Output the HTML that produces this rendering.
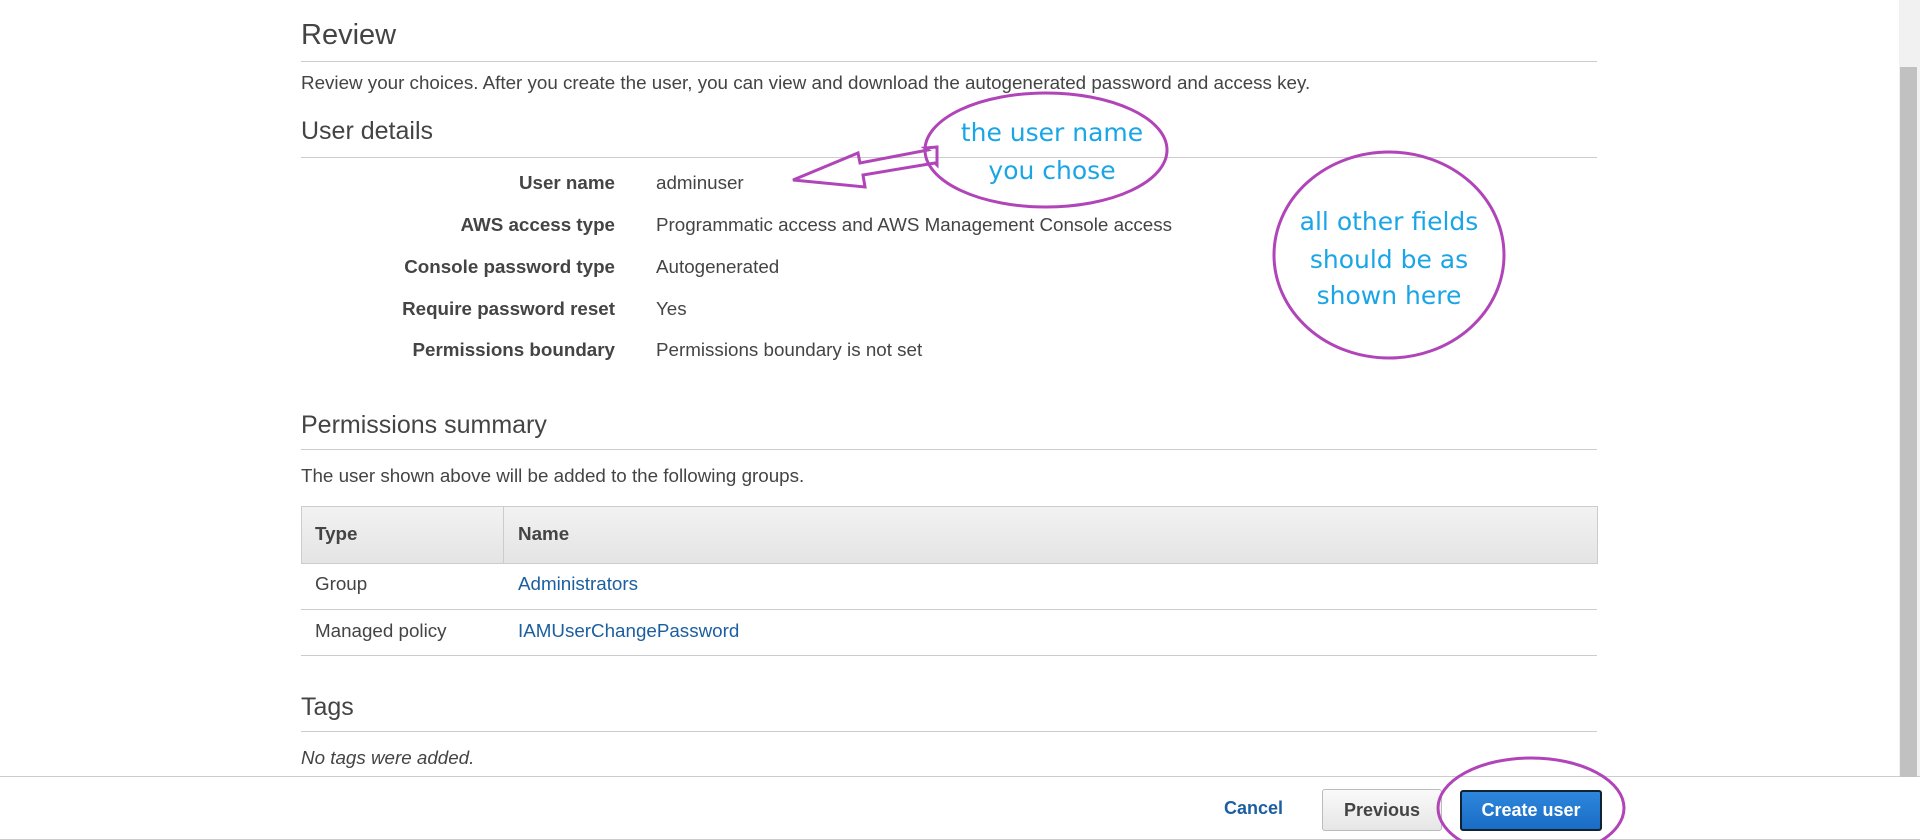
<!DOCTYPE html>
<html><head><meta charset="utf-8"><style>
body{margin:0;width:1920px;height:840px;overflow:hidden;background:#fff;font-family:"Liberation Sans",Arial,sans-serif;color:#444;position:relative}
.a{position:absolute;white-space:nowrap}
.h{font-size:29px;color:#444}
.line{position:absolute;left:301px;width:1296px;height:1px;background:#ccc}
.t{font-size:18.8px;color:#444}
.lbl{font-weight:bold;text-align:right;width:315px;left:300px}
.lnk{color:#1c5fa0}
</style></head><body>
<div class="a h" style="left:301px;top:19px">Review</div>
<div class="line" style="top:61px"></div>
<div class="a t" style="left:301px;top:72px">Review your choices. After you create the user, you can view and download the autogenerated password and access key.</div>
<div class="a h" style="left:301px;top:117px;font-size:25px">User details</div>
<div class="line" style="top:157px"></div>
<div class="a t lbl" style="top:172px">User name</div><div class="a t" style="left:656px;top:172px">adminuser</div>
<div class="a t lbl" style="top:214px">AWS access type</div><div class="a t" style="left:656px;top:214px">Programmatic access and AWS Management Console access</div>
<div class="a t lbl" style="top:256px">Console password type</div><div class="a t" style="left:656px;top:256px">Autogenerated</div>
<div class="a t lbl" style="top:298px">Require password reset</div><div class="a t" style="left:656px;top:298px">Yes</div>
<div class="a t lbl" style="top:339px">Permissions boundary</div><div class="a t" style="left:656px;top:339px">Permissions boundary is not set</div>
<div class="a h" style="left:301px;top:411px;font-size:25px">Permissions summary</div>
<div class="line" style="top:449px"></div>
<div class="a t" style="left:301px;top:465px">The user shown above will be added to the following groups.</div>
<div class="a" style="left:301px;top:506px;width:1295px;height:56px;background:linear-gradient(#f2f2f2,#e4e4e4);border:1px solid #ccc"></div>
<div class="a" style="left:503px;top:507px;width:1px;height:56px;background:#ccc"></div>
<div class="a t" style="left:315px;top:523px;font-weight:bold">Type</div>
<div class="a t" style="left:518px;top:523px;font-weight:bold">Name</div>
<div class="a t" style="left:315px;top:573px">Group</div><div class="a t lnk" style="left:518px;top:573px">Administrators</div>
<div class="line" style="top:609px"></div>
<div class="a t" style="left:315px;top:620px">Managed policy</div><div class="a t lnk" style="left:518px;top:620px">IAMUserChangePassword</div>
<div class="line" style="top:655px"></div>
<div class="a h" style="left:301px;top:693px;font-size:25px">Tags</div>
<div class="line" style="top:731px"></div>
<div class="a t" style="left:301px;top:747px;font-style:italic">No tags were added.</div>
<div class="a" style="left:0;top:776px;width:1920px;height:1px;background:#ccc"></div>
<div class="a" style="left:0;top:839px;width:1920px;height:1px;background:#ccc"></div>
<div class="a" style="left:1899px;top:0;width:21px;height:776px;background:#f1f1f1"></div>
<div class="a" style="left:1900px;top:67px;width:17px;height:710px;background:#c1c1c1"></div>
<div class="a" style="left:1224px;top:798px;font-size:18px;font-weight:bold;color:#1c5fa0">Cancel</div>
<div class="a" style="left:1322px;top:789px;width:118px;height:40px;border:1px solid #bbb;border-radius:3px;background:linear-gradient(#fafafa,#e6e6e6);font-size:18px;font-weight:bold;color:#444;text-align:center;line-height:40px">Previous</div>
<div class="a" style="left:1460px;top:790px;width:138px;height:37px;border:2px solid #123;border-radius:3px;background:linear-gradient(#2d87dd,#1a6cc4);font-size:18px;font-weight:bold;color:#fff;text-align:center;line-height:37px">Create user</div>
<svg class="a" style="left:0;top:0" width="1920" height="840">
<g fill="none" stroke="#b044b8" stroke-width="3">
<ellipse cx="1046" cy="150" rx="121" ry="57"/>
<ellipse cx="1389" cy="255" rx="115" ry="103"/>
<ellipse cx="1531" cy="808" rx="93" ry="50"/>
<path d="M793,180 L858,153 L860,163 L928,150 L925,148 L937,147 L937,165 L935,163 L863,175 L865,187 Z"/>
</g>
<g fill="#1aa5e6" font-family="DejaVu Sans,Liberation Sans,sans-serif" font-size="25" text-anchor="middle">
<text x="1052" y="141">the user name</text>
<text x="1052" y="179">you chose</text>
<text x="1389" y="230">all other fields</text>
<text x="1389" y="268">should be as</text>
<text x="1389" y="304">shown here</text>
</g>
</svg>
</body></html>
